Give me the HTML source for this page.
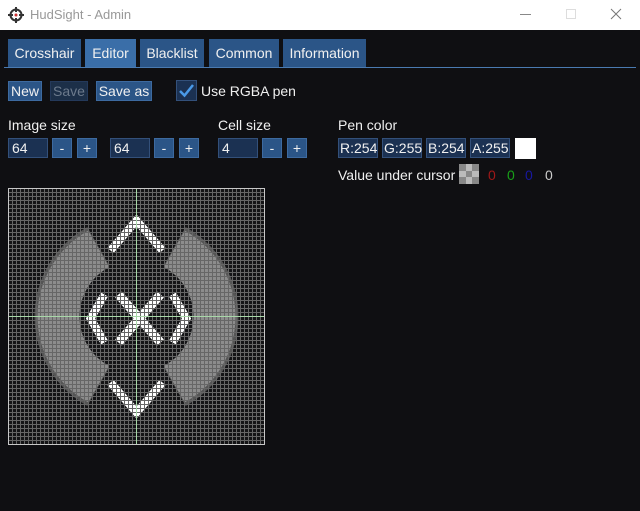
<!DOCTYPE html>
<html><head><meta charset="utf-8"><style>
*{margin:0;padding:0;box-sizing:border-box}
body{width:640px;height:511px;overflow:hidden;background:#0f0f12;font-family:"Liberation Sans",sans-serif;font-size:14px;color:#f0f0f0;position:relative}
.a{position:absolute}
.title{left:0;top:0;width:640px;height:30px;background:#fff}
.tab{position:absolute;top:39px;height:28px;background:#2b5587;color:#f0f0f0;line-height:28px;text-align:center;font-size:14px}
.btn{position:absolute;height:20px;background:#2b5587;border:1px solid #3d6aa0;line-height:18px;text-align:center;font-size:14px}
.inp{position:absolute;height:20px;background:#1b3152;border:1px solid #33507a;line-height:18px;padding-left:3px;font-size:14px}
.lbl{position:absolute;font-size:14px}
</style></head><body>
<div class="a title">
  <svg class="a" style="left:8px;top:7px" width="16" height="16" viewBox="0 0 16 16"><circle cx="8" cy="8" r="5.5" fill="none" stroke="#333" stroke-width="2"/><path d="M8 0v5M8 11v5M0 8h5M11 8h5" stroke="#333" stroke-width="2"/><circle cx="8" cy="8" r="1.5" fill="#c33"/></svg>
  <div class="a" style="left:30px;top:7px;color:#999;font-size:13px">HudSight - Admin</div>
  <div class="a" style="left:520px;top:14px;width:11px;height:1px;background:#888"></div>
  <div class="a" style="left:566px;top:9px;width:10px;height:10px;border:1px solid #ddd"></div>
  <svg class="a" style="left:610px;top:8px" width="12" height="12"><path d="M1 1L11 11M11 1L1 11" stroke="#777" stroke-width="1"/></svg>
</div>
<div class="tab" style="left:8px;width:73px">Crosshair</div>
<div class="tab" style="left:85px;width:51px;background:#3a6ea8">Editor</div>
<div class="tab" style="left:140px;width:64px">Blacklist</div>
<div class="tab" style="left:209px;width:70px">Common</div>
<div class="tab" style="left:283px;width:83px">Information</div>
<div class="a" style="left:4px;top:67px;width:632px;height:1px;background:#4a7ab0"></div>

<div class="btn" style="left:8px;top:81px;width:34px">New</div>
<div class="btn" style="left:50px;top:81px;width:38px;background:#1c2f48;border-color:#24395a;color:#6c7a8c">Save</div>
<div class="btn" style="left:96px;top:81px;width:56px">Save as</div>
<div class="a" style="left:176px;top:80px;width:21px;height:21px;background:#1b3152;border:1px solid #33507a"></div>
<svg class="a" style="left:176px;top:80px" width="21" height="21"><path d="M4 11L8.5 15.5L17 5" fill="none" stroke="#4a9ae8" stroke-width="2.5"/></svg>
<div class="lbl" style="left:201px;top:83px">Use RGBA pen</div>

<div class="lbl" style="left:8px;top:117px">Image size</div>
<div class="lbl" style="left:218px;top:117px">Cell size</div>
<div class="lbl" style="left:338px;top:117px">Pen color</div>

<div class="inp" style="left:8px;top:138px;width:40px">64</div>
<div class="btn" style="left:52px;top:138px;width:20px">-</div>
<div class="btn" style="left:77px;top:138px;width:20px">+</div>
<div class="inp" style="left:110px;top:138px;width:40px">64</div>
<div class="btn" style="left:154px;top:138px;width:20px">-</div>
<div class="btn" style="left:179px;top:138px;width:20px">+</div>
<div class="inp" style="left:218px;top:138px;width:40px">4</div>
<div class="btn" style="left:262px;top:138px;width:20px">-</div>
<div class="btn" style="left:287px;top:138px;width:20px">+</div>

<div class="inp" style="left:338px;top:138px;width:40px;padding-left:1px">R:254</div>
<div class="inp" style="left:382px;top:138px;width:40px;padding-left:1px">G:255</div>
<div class="inp" style="left:426px;top:138px;width:40px;padding-left:1px">B:254</div>
<div class="inp" style="left:470px;top:138px;width:40px;padding-left:1px">A:255</div>
<div class="a" style="left:515px;top:138px;width:21px;height:21px;background:#fff"></div>

<div class="lbl" style="left:338px;top:167px">Value under cursor</div>
<svg class="a" style="left:459px;top:164px" width="20" height="20"><rect width="20" height="20" fill="#bbb"/><rect x="0" y="0" width="7" height="7" fill="#888"/><rect x="13" y="0" width="7" height="7" fill="#888"/><rect x="7" y="7" width="6" height="6" fill="#888"/><rect x="0" y="13" width="7" height="7" fill="#888"/><rect x="13" y="13" width="7" height="7" fill="#888"/></svg>
<div class="lbl" style="left:488px;top:167px;color:#a01818">0</div>
<div class="lbl" style="left:507px;top:167px;color:#18a018">0</div>
<div class="lbl" style="left:525px;top:167px;color:#1818a0">0</div>
<div class="lbl" style="left:545px;top:167px;color:#ccc">0</div>

<svg class="a" style="left:8px;top:188px" width="257" height="257" viewBox="0 0 257 257">
  <defs>
    <pattern id="g" width="4" height="4" patternUnits="userSpaceOnUse"><path d="M0 0.5H4M0.5 0V4" stroke="#666" stroke-width="1"/></pattern>
    <clipPath id="cl"><polygon points="-40,-40 34,-40 107,88 107,168 34,296 -40,296"/></clipPath>
    <clipPath id="cr"><polygon points="296,-40 222,-40 149,88 149,168 222,296 296,296"/></clipPath>
  </defs>
  <rect width="257" height="257" fill="#141416"/>
  <g transform="translate(0.5,0.5)">
  <path d="M128 26a102 102 0 1 0 0.01 0ZM128 68a60 60 0 1 1 -0.01 0Z" fill="#555" fill-rule="evenodd" clip-path="url(#cl)"/>
  <path d="M128 26a102 102 0 1 0 0.01 0ZM128 68a60 60 0 1 1 -0.01 0Z" fill="#555" fill-rule="evenodd" clip-path="url(#cr)"/>
  <path d="M128 30a98 98 0 1 0 0.01 0ZM128 72a56 56 0 1 1 -0.01 0Z" fill="#8c8c8c" fill-rule="evenodd" clip-path="url(#cl)" transform="translate(-1,0)"/>
  <path d="M128 30a98 98 0 1 0 0.01 0ZM128 72a56 56 0 1 1 -0.01 0Z" fill="#8c8c8c" fill-rule="evenodd" clip-path="url(#cr)" transform="translate(1,0)"/>
  <g fill="none" stroke="#fff" stroke-width="8" stroke-linejoin="miter">
    <polyline points="102,62 128,32 154,62"/>
    <polyline points="102,194 128,224 154,194"/>
    <path d="M110 106L152 154M152 106L110 154" stroke-width="9"/>
    <polyline points="96,106 82,130 96,154"/>
    <polyline points="164,106 178,130 164,154"/>
  </g>
  </g>
  <rect width="257" height="257" fill="url(#g)"/>
  <rect x="128" y="0" width="1" height="257" fill="#a8d8a8"/>
  <rect x="0" y="128" width="257" height="1" fill="#a8d8a8"/>
  <rect x="0.5" y="0.5" width="256" height="256" fill="none" stroke="#c8c8c8"/>
</svg>
</body></html>
